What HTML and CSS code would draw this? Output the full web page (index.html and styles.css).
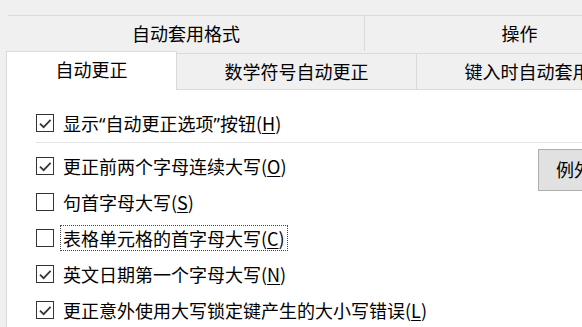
FILE: index.html
```html
<!DOCTYPE html>
<html lang="zh-CN">
    <head>
        <meta charset="utf-8" />
        <title>自动更正</title>
        <link rel="stylesheet" href="styles.css">
    </head>
    <body>
        <div class="dlg">
            <div class="tab-row row1">
                <div class="tab t-format">自动套用格式</div>
                <div class="tab t-action">操作</div>
            </div>
            <div class="tab-row row2">
                <div class="tab t-auto on">自动更正</div>
                <div class="tab t-math">数学符号自动更正</div>
                <div class="tab t-type">键入时自动套用格式</div>
            </div>
            <div class="panel">
                <div class="opt">
                    <span class="cb"><svg width="16" height="16" viewBox="0 0 16 16"><path d="M3 8.6 L6.6 12.2 L13.6 4.8" fill="none" stroke="#333" stroke-width="1.7"/></svg></span>
                    <span class="lbl">显示<span class="q">“</span>自动更正选项<span class="q">”</span>按钮(<u>H</u>)</span>
                </div>
                <div class="sep"></div>
                <div class="main">
                    <div class="list">
                        <div class="opt">
                            <span class="cb"><svg width="16" height="16" viewBox="0 0 16 16"><path d="M3 8.6 L6.6 12.2 L13.6 4.8" fill="none" stroke="#333" stroke-width="1.7"/></svg></span>
                            <span class="lbl">更正前两个字母连续大写(<u>O</u>)</span>
                        </div>
                        <div class="opt">
                            <span class="cb"></span>
                            <span class="lbl">句首字母大写(<u>S</u>)</span>
                        </div>
                        <div class="opt">
                            <span class="cb"></span>
                            <span class="lbl focus">表格单元格的首字母大写(<u>C</u>)</span>
                        </div>
                        <div class="opt">
                            <span class="cb"><svg width="16" height="16" viewBox="0 0 16 16"><path d="M3 8.6 L6.6 12.2 L13.6 4.8" fill="none" stroke="#333" stroke-width="1.7"/></svg></span>
                            <span class="lbl">英文日期第一个字母大写(<u>N</u>)</span>
                        </div>
                        <div class="opt">
                            <span class="cb"><svg width="16" height="16" viewBox="0 0 16 16"><path d="M3 8.6 L6.6 12.2 L13.6 4.8" fill="none" stroke="#333" stroke-width="1.7"/></svg></span>
                            <span class="lbl">更正意外使用大写锁定键产生的大小写错误(<u>L</u>)</span>
                        </div>
                    </div>
                    <div class="btn">例外(<u>E</u>)...</div>
                </div>
            </div>
        </div>
    </body>
</html>
```

FILE: styles.css
```css
* { margin: 0; padding: 0; box-sizing: border-box; }
html, body { width: 582px; height: 327px; overflow: hidden; }
body { background: #f0f0f0; font: 18px/1.2 "Microsoft YaHei", "Noto Sans CJK SC", "Noto Sans", sans-serif; color: #000; }

.dlg { padding-top: 15px; width: 700px; }

.tab-row { display: flex; align-items: flex-end; }
.tab { flex: none; display: flex; align-items: center; justify-content: center; white-space: nowrap; background: #f0f0f0; border-top: 1px solid #dadada; border-right: 1px solid #dadada; }

.row1 { margin-left: 8px; height: 36px; }
.row1 .tab { height: 36px; }
.t-format { width: 357px; }
.t-action { width: 310px; }

.row2 { margin-left: 6px; height: 38px; }
.row2 .tab { height: 36px; }
.t-auto { width: 171px; }
.t-math { width: 240px; }
.t-type { width: 258px; }
.row2 .tab.on { position: relative; z-index: 1; height: 39px; margin-bottom: -1px; background: #fff; border-left: 1px solid #dadada; padding-bottom: 3px; }

.panel { margin-left: 6px; height: 260px; background: #fff; border-top: 1px solid #dadada; border-left: 1px solid #dadada; padding: 15px 0 0 29px; }

.opt { display: flex; align-items: center; height: 36px; }
.cb { flex: none; width: 18px; height: 18px; border: 1px solid #333; background: #fff; display: flex; align-items: center; justify-content: center; margin-right: 6px; }
.cb svg { display: block; }
.lbl { display: inline-block; line-height: 24px; padding: 0 2px; border: 1px dotted transparent; white-space: nowrap; }
.lbl.focus { border-color: #444; }
.q { font-family: "Noto Sans", sans-serif; }
u { text-decoration: underline; text-underline-offset: 2px; }

.sep { height: 1px; background: #e3e3e3; margin: 1px 0 5px; }

.main { display: flex; align-items: flex-start; }
.list { width: 502px; flex: none; }
.btn { flex: none; margin-top: 1px; width: 120px; height: 42px; background: #e1e1e1; border: 1px solid #adadad; padding-left: 17px; display: flex; align-items: center; white-space: nowrap; }
```
